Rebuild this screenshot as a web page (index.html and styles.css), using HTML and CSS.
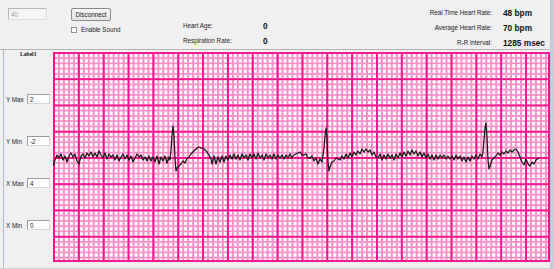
FILE: index.html
```html
<!DOCTYPE html>
<html lang="en">
<head>
    <meta charset="UTF-8">
    <meta name="viewport" content="width=device-width, initial-scale=1.0">
    <title>ECG Monitor</title>
    <link rel="stylesheet" href="styles.css">
</head>
<body>

<div class="window">
    <div class="app">
        <header class="toolbar">
            <div class="col-port">
                <input class="port" type="text" value="40" disabled>
            </div>

            <div class="col-conn">
                <button type="button" class="btn">Disconnect</button>
                <label class="check"><span class="box"></span>Enable Sound</label>
            </div>

            <div class="col-stats">
                <span class="lbl">Heart Age:</span><span class="val">0</span>
                <span class="lbl">Respiration Rate:</span><span class="val">0</span>
            </div>

            <div class="col-rates">
                <span class="lbl">Real Time Heart Rate:</span><span class="val">48 bpm</span>
                <span class="lbl">Average Heart Rate:</span><span class="val">70 bpm</span>
                <span class="lbl">R-R interval:</span><span class="val">1285 msec</span>
            </div>
        </header>

        <div class="main">
            <aside class="axes">
                <div class="axes-title">Label1</div>
                <div class="axis-row"><span>Y Max</span><input type="text" value="2"></div>
                <div class="axis-row"><span>Y Min</span><input type="text" value="-2"></div>
                <div class="axis-row"><span>X Max</span><input type="text" value="4"></div>
                <div class="axis-row"><span>X Min</span><input type="text" value="0"></div>
            </aside>

            <div class="chart">
                <svg class="trace" width="497" height="210" viewBox="54 52 497 210">
                    <polyline fill="none" stroke="#141414" stroke-width="1.25" stroke-linejoin="round" points="
                        54,166 56,160 58,155 60,158 62,154 64,160 66,156 68,162 70,156 72,153 74,157 76,154 78,161 80,164 82,156 84,154
                        86,158 88,153 90,156 92,152 94,157 96,153 98,157 100,151 102,155 104,158 106,153 108,159 110,154 112,157 114,155
                        116,160 118,155 120,161 122,157 124,154 126,159 128,155 130,160 132,156 134,162 136,158 138,154 140,157 142,155
                        144,160 146,157 148,161 150,156 152,161 154,157 156,162 158,156 160,164 162,157 164,161 166,156 168,163 170,157
                        171,160 172,150 173,136 174,126 175,136 176,158 177,171 178,168 180,166 182,164 184,161 186,163 188,158 190,157
                        192,154 194,152 196,150 198,148 200,147 202,148 204,148 206,150 208,152 210,155 212,159 213,164 215,156 217,164
                        219,157 221,162 223,156 225,162 227,156 229,160 231,155 233,159 235,154 237,159 239,155 241,160 243,154 245,158
                        247,155 249,160 251,154 253,158 255,154 257,159 259,153 261,158 263,155 265,160 267,154 269,158 271,155 273,159
                        275,154 277,159 279,155 281,158 283,155 285,159 287,155 289,158 291,154 293,158 295,155 297,154 299,153 301,152
                        303,155 305,155 307,154 309,158 311,158 313,156 315,161 317,158 319,164 321,159 323,162 324,155 325,148 326,136
                        327,128 328,140 329,162 330,171 331,167 333,162 335,161 337,158 339,159 341,160 343,156 345,159 347,154 349,158
                        351,153 353,157 355,152 357,155 359,151 361,154 363,149 365,152 367,149 369,152 371,150 373,155 375,152 377,157
                        379,158 381,154 383,160 385,155 387,159 389,154 391,158 393,155 395,160 397,154 399,158 401,153 403,157 405,152
                        407,156 409,151 411,155 413,150 415,154 417,151 419,156 421,152 423,157 425,153 427,158 429,154 431,159 433,155
                        435,160 437,155 439,159 441,155 443,158 445,155 447,159 449,156 451,159 453,156 455,160 457,155 459,159 461,156
                        463,161 465,157 467,162 469,157 471,161 473,156 475,159 477,155 479,159 481,154 483,157 484,152 485,140 486,128
                        487,123 488,138 489,160 490,169 491,166 493,160 495,158 497,156 499,153 501,155 503,152 505,154 507,151 509,153
                        511,150 513,152 515,150 517,149 519,152 521,157 523,162 525,165 527,159 529,164 531,166 533,162 535,164 537,160
                        540,158"/>
                </svg>
            </div>
        </div>
    </div>
    <div class="frame-edge"></div>
</div>

</body>
</html>
```

FILE: styles.css
```css
* { box-sizing: border-box; }
body { margin: 0; background-color: #f0f0f0; font-family: "Liberation Sans", Arial, sans-serif; color: #222; }
.window { display: flex; width: 554px; height: 269px; overflow: hidden; }
.app { width: 551px; display: flex; flex-direction: column; border-right: 1px solid #c6c6c6; }
.frame-edge { width: 3px; background-color: #c3cfdc; }

/* top toolbar */
.toolbar { height: 50px; display: flex; border-bottom: 1px solid #b4b4b4; font-size: 6.3px; }
.col-port { width: 71px; padding: 8px 0 0 8px; }
.port { width: 39px; height: 12px; padding: 0 2px; border: 1px solid #b5b5b5; border-right-color: #dcdcdc; border-bottom-color: #dcdcdc; background-color: #f4f4f4; color: #a3a3a3; font-family: inherit; font-size: 6.3px; }
.col-conn { width: 112px; padding-top: 8px; display: flex; flex-direction: column; align-items: flex-start; gap: 5px; }
.btn { width: 40px; height: 13px; padding: 0; border: 1px solid #8a8a8a; border-radius: 2px; background: linear-gradient(#f8f8f8, #e2e2e2); font-family: inherit; font-size: 6.3px; color: #222; }
.check { display: flex; align-items: center; gap: 4px; }
.box { width: 6px; height: 6px; border: 1px solid #8e8f8f; background-color: #fff; }
.col-stats { display: grid; grid-template-columns: 80px auto; grid-auto-rows: 15px; align-items: center; padding-top: 18px; }
.col-rates { margin-left: auto; display: grid; grid-template-columns: auto 47px; column-gap: 11px; grid-auto-rows: 15px; align-items: center; padding-top: 5px; }
.col-rates .lbl { text-align: right; }
.val { font-weight: bold; font-size: 8.3px; color: #111; }

/* chart area */
.main { flex: 1; display: flex; border-bottom: 1px solid #cfcfcf; }
.axes { width: 51px; margin-left: 3px; border-left: 1px solid #a9bccf; padding-left: 2px; font-size: 6.3px; }
.axes-title { height: 28px; padding: 1px 0 0 14px; font-family: "Liberation Serif", serif; font-weight: bold; font-size: 5.6px; color: #111; }
.axis-row { height: 42px; display: flex; align-items: center; }
.axis-row span { width: 21px; }
.axis-row input { width: 23px; height: 10px; padding: 0 2px; border: 1px solid #9c9c9c; border-right-color: #d8d8d8; border-bottom-color: #d8d8d8; background-color: #fff; font-family: inherit; font-size: 6.3px; color: #222; }

.chart {
    width: 497px; height: 210px; margin-top: 2px;
    background-color: #fff;
    background-image:
        linear-gradient(to right, #ff1590 2px, transparent 2px),
        linear-gradient(to bottom, #ff1590 2px, transparent 2px),
        linear-gradient(to right, #ff8fca 2px, transparent 2px),
        linear-gradient(to bottom, #ff8fca 2px, transparent 2px);
    background-size: 24.85px 100%, 100% 26.25px, 4.97px 100%, 100% 5.25px;
    box-shadow: inset -2px -2px 0 #ff1590;
}
.trace { display: block; }
```
